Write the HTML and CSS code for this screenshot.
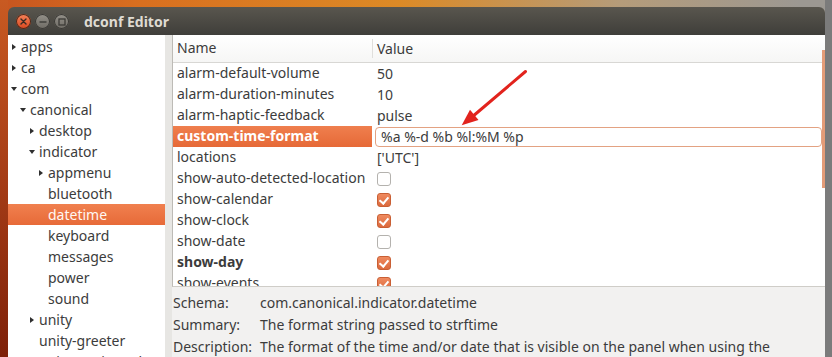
FILE: index.html
```html
<!DOCTYPE html>
<html lang="en">
<head>
    <meta charset="UTF-8">
    <title>dconf Editor</title>
    <link rel="stylesheet" href="styles.css">
</head>
<body>

<div class="window">
    <!-- Title bar -->
    <div class="titlebar">
        <div class="wm-buttons">
            <span class="wm-btn close">
                <svg width="7" height="7" viewBox="0 0 7 7"><path d="M1 1 L6 6 M6 1 L1 6" stroke="#3a2a22" stroke-width="1.4" stroke-linecap="round"/></svg>
            </span>
            <span class="wm-btn">
                <svg width="8" height="8" viewBox="0 0 8 8"><path d="M0.5 4 H7.5" stroke="#3c3b37" stroke-width="1.4"/></svg>
            </span>
            <span class="wm-btn">
                <svg width="8" height="8" viewBox="0 0 8 8"><rect x="1" y="1" width="6" height="6" fill="none" stroke="#3c3b37" stroke-width="1.3"/></svg>
            </span>
        </div>
        <span class="title">dconf Editor</span>
    </div>

    <div class="content">
        <!-- Schema tree -->
        <div class="tree">
            <div class="node l0"><span class="exp closed"></span>apps</div>
            <div class="node l0"><span class="exp closed"></span>ca</div>
            <div class="node l0"><span class="exp open"></span>com</div>
            <div class="node l1"><span class="exp open"></span>canonical</div>
            <div class="node l2"><span class="exp closed"></span>desktop</div>
            <div class="node l2"><span class="exp open"></span>indicator</div>
            <div class="node l3"><span class="exp closed"></span>appmenu</div>
            <div class="node l3"><span class="exp"></span>bluetooth</div>
            <div class="node l3 selected"><span class="exp"></span>datetime</div>
            <div class="node l3"><span class="exp"></span>keyboard</div>
            <div class="node l3"><span class="exp"></span>messages</div>
            <div class="node l3"><span class="exp"></span>power</div>
            <div class="node l3"><span class="exp"></span>sound</div>
            <div class="node l2"><span class="exp closed"></span>unity</div>
            <div class="node l2"><span class="exp"></span>unity-greeter</div>
            <div class="node l2"><span class="exp"></span>unity-settings-daemon</div>
        </div>

        <div class="pane-handle"></div>

        <div class="right">
            <!-- Keys list -->
            <div class="keys">
                <div class="key-head">
                    <div class="col-name">Name</div>
                    <div class="col-value">Value</div>
                </div>
                <div class="key-row"><div class="col-name">alarm-default-volume</div><div class="col-value">50</div></div>
                <div class="key-row"><div class="col-name">alarm-duration-minutes</div><div class="col-value">10</div></div>
                <div class="key-row"><div class="col-name">alarm-haptic-feedback</div><div class="col-value">pulse</div></div>
                <div class="key-row editing">
                    <div class="col-name">custom-time-format</div>
                    <div class="col-value"><div class="entry">%a %-d %b %l:%M %p</div></div>
                </div>
                <div class="key-row"><div class="col-name">locations</div><div class="col-value">['UTC']</div></div>
                <div class="key-row"><div class="col-name">show-auto-detected-location</div><div class="col-value"><span class="check"></span></div></div>
                <div class="key-row"><div class="col-name">show-calendar</div><div class="col-value"><span class="check on"></span></div></div>
                <div class="key-row"><div class="col-name">show-clock</div><div class="col-value"><span class="check on"></span></div></div>
                <div class="key-row"><div class="col-name">show-date</div><div class="col-value"><span class="check"></span></div></div>
                <div class="key-row"><div class="col-name bold">show-day</div><div class="col-value"><span class="check on"></span></div></div>
                <div class="key-row"><div class="col-name">show-events</div><div class="col-value"><span class="check on"></span></div></div>
                <div class="scroll-thumb"></div>
            </div>

            <!-- Key details -->
            <div class="info">
                <span>Schema:</span><span>com.canonical.indicator.datetime</span>
                <span>Summary:</span><span>The format string passed to strftime</span>
                <span>Description:</span><span>The format of the time and/or date that is visible on the panel when using the</span>
            </div>
        </div>
    </div>
</div>

<!-- annotation arrow -->
<svg class="arrow" width="832" height="357" viewBox="0 0 832 357">
    <line x1="525.5" y1="71.5" x2="472" y2="117" stroke="#e2231d" stroke-width="3" stroke-linecap="round"/>
    <polygon points="461.7,125.3 478.5,120 470,109.8" fill="#e2231d"/>
</svg>

</body>
</html>
```

FILE: styles.css
```css
html, body {
    margin: 0;
    height: 357px;
    overflow: hidden;
}
body {
    position: relative;
    font-family: "Noto Sans", "DejaVu Sans", sans-serif;
    font-size: 14px;
    color: #3c3c3c;
    background:
        linear-gradient(to right, transparent 825px, #7b7b7b 825px),
        linear-gradient(to bottom, #c85a22 0, #a53c16 180px, #7e2109 357px) left top / 8px 100% no-repeat,
        linear-gradient(to right, #c75520 0, #d96f1f 140px, #dc8a26 400px, #b59c7a 620px, #9c9892 800px);
}
.window {
    margin: 7px 0 0 8px;
    width: 817px;
}

/* title bar */
.titlebar {
    height: 28px;
    display: flex;
    align-items: center;
    background: linear-gradient(#59564e, #3f3e3a);
    border-radius: 6px 6px 0 0;
    padding-left: 8px;
}
.wm-buttons {
    display: flex;
    gap: 4px;
    margin-top: 1px;
}
.wm-btn {
    width: 15px;
    height: 15px;
    border-radius: 50%;
    display: flex;
    align-items: center;
    justify-content: center;
    background: linear-gradient(#94918a, #6e6b64);
    box-shadow: inset 0 0 0 1px #3a3935;
}
.wm-btn.close {
    background: linear-gradient(#f5835a, #d9481f);
    box-shadow: inset 0 0 0 1px #4a2a1c;
}
.title {
    margin-left: 15px;
    font-weight: bold;
    font-size: 14px;
    color: #dfdbd2;
}

/* body of the window */
.content {
    display: flex;
    height: 330px;
}
.tree {
    width: 157px;
    background: #ffffff;
    padding-top: 1px;
    overflow: hidden;
}
.node {
    height: 21px;
    line-height: 21px;
    display: flex;
    align-items: center;
    white-space: nowrap;
    padding-left: 1px;
}
.node.l1 { padding-left: 10px; }
.node.l2 { padding-left: 19px; }
.node.l3 { padding-left: 28px; }
.node.selected {
    background: linear-gradient(#f0804f, #e76a38);
    color: #fff7f2;
}
.exp {
    width: 10px;
    height: 10px;
    margin-right: 2px;
    display: flex;
    align-items: center;
    justify-content: center;
    flex-shrink: 0;
}
.exp.closed::before {
    content: "";
    border-left: 4px solid #2f2f2f;
    border-top: 3.5px solid transparent;
    border-bottom: 3.5px solid transparent;
}
.exp.open::before {
    content: "";
    border-top: 4px solid #2f2f2f;
    border-left: 3.5px solid transparent;
    border-right: 3.5px solid transparent;
}
.pane-handle {
    width: 7px;
    background: #e7e6e3;
}
.right {
    flex: 1;
    display: flex;
    flex-direction: column;
}
.keys {
    position: relative;
    height: 251px;
    background: #ffffff;
    border-left: 1px solid #bdbbb6;
    border-bottom: 1px solid #cfcdc8;
    overflow: hidden;
}
.key-head,
.key-row {
    display: flex;
    height: 21px;
    line-height: 21px;
    white-space: nowrap;
}
.key-head {
    height: 27px;
    line-height: 26px;
    background: linear-gradient(#ffffff, #f6f6f5);
    border-bottom: 1px solid #d8d7d4;
}
.key-row {
    line-height: 20px;
}
.col-name {
    width: 195px;
    padding-left: 4px;
}
.col-value {
    flex: 1;
    padding-left: 5px;
    display: flex;
    align-items: center;
}
.key-head .col-value {
    border-left: 1px solid #e0dfdc;
    margin: 4px 0;
    line-height: 18px;
    padding-left: 4px;
}
.key-row.editing .col-name {
    background: linear-gradient(#ef7f4e, #e66937);
    color: #ffffff;
    font-weight: bold;
}
.key-row.editing .col-value {
    padding-left: 3px;
    padding-right: 3px;
}
.entry {
    flex: 1;
    height: 18px;
    line-height: 18px;
    border: 1px solid #e3a282;
    border-radius: 4px;
    padding-left: 5px;
    background: #ffffff;
}
.bold {
    font-weight: bold;
}
.check {
    width: 12px;
    height: 12px;
    border: 1px solid #b4b2ae;
    border-radius: 3px;
    background: #ffffff;
    position: relative;
}
.check.on {
    background: linear-gradient(#ef8a5f, #dc6a3e);
    border-color: #c95f34;
}
.check.on::after {
    content: "";
    position: absolute;
    left: 3px;
    top: 1px;
    width: 4px;
    height: 7px;
    border-right: 2px solid #ffffff;
    border-bottom: 2px solid #ffffff;
    transform: rotate(40deg);
}
.scroll-thumb {
    position: absolute;
    right: 0;
    top: 15px;
    width: 3px;
    height: 138px;
    background: #e49c78;
}

/* details under the list */
.info {
    flex: 1;
    background: #f2f1f0;
    display: grid;
    grid-template-columns: 87px 1fr;
    grid-auto-rows: 22px;
    line-height: 22px;
    padding: 5px 0 0 1px;
    white-space: nowrap;
    align-content: start;
}

.arrow {
    position: absolute;
    left: 0;
    top: 0;
    pointer-events: none;
}
```
